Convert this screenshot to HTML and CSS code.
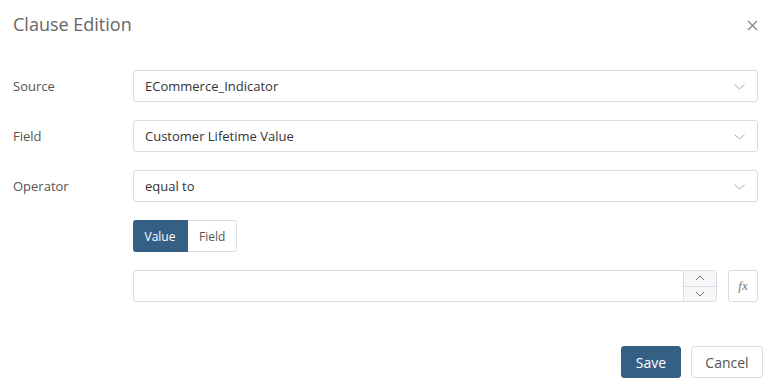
FILE: index.html
```html
<!DOCTYPE html>
<html lang="en">
<head>
  <meta charset="UTF-8">
  <title>Clause Edition</title>
  <link rel="stylesheet" href="styles.css">
</head>
<body>
  <div class="modal">
    <header class="modal-header">
      <h1>Clause Edition</h1>
      <button class="close" aria-label="Close">
        <svg width="11" height="11" viewBox="0 0 11 11"><path d="M1 1L10 10M10 1L1 10" stroke="#888" stroke-width="1.4"/></svg>
      </button>
    </header>

    <main class="modal-body">
      <div class="row">
        <label>Source</label>
        <div class="select">ECommerce_Indicator<svg class="caret" width="11" height="6" viewBox="0 0 11 6"><path d="M0.5 0.5L5.5 5L10.5 0.5" fill="none" stroke="#aaa" stroke-width="1"/></svg></div>
      </div>
      <div class="row">
        <label>Field</label>
        <div class="select">Customer Lifetime Value<svg class="caret" width="11" height="6" viewBox="0 0 11 6"><path d="M0.5 0.5L5.5 5L10.5 0.5" fill="none" stroke="#aaa" stroke-width="1"/></svg></div>
      </div>
      <div class="row">
        <label>Operator</label>
        <div class="select">equal to<svg class="caret" width="11" height="6" viewBox="0 0 11 6"><path d="M0.5 0.5L5.5 5L10.5 0.5" fill="none" stroke="#aaa" stroke-width="1"/></svg></div>
      </div>
      <div class="row">
        <span></span>
        <div class="toggle">
          <button class="active">Value</button>
          <button>Field</button>
        </div>
      </div>
      <div class="row">
        <span></span>
        <div class="value-line">
          <div class="number">
            <input type="text">
            <div class="spin">
              <span><svg width="10" height="6" viewBox="0 0 10 6"><path d="M1 5L5 1L9 5" fill="none" stroke="#777" stroke-width="1"/></svg></span>
              <span><svg width="10" height="6" viewBox="0 0 10 6"><path d="M1 1L5 5L9 1" fill="none" stroke="#777" stroke-width="1"/></svg></span>
            </div>
          </div>
          <button class="fx"><i>fx</i></button>
        </div>
      </div>
    </main>

    <footer class="modal-footer">
      <button class="btn primary">Save</button>
      <button class="btn">Cancel</button>
    </footer>
  </div>
</body>
</html>
```

FILE: styles.css
```css
body {
  margin: 0;
  background-color: #fff;
  font-family: "Open Sans", Arial, sans-serif;
  color: #333;
}

.modal {
  width: 776px;
  height: 389px;
}

.modal-header {
  display: flex;
  align-items: center;
  justify-content: space-between;
  height: 48px;
  padding: 0 18px 0 13px;
}

.modal-header h1 {
  margin: 0;
  font-size: 18px;
  font-weight: 400;
  color: #666;
}

.close {
  border: none;
  background: none;
  padding: 0;
  cursor: pointer;
  display: flex;
  margin-top: 2px;
}

.modal-body {
  padding: 22px 18px 0 13px;
}

.row {
  display: grid;
  grid-template-columns: 120px 1fr;
  align-items: center;
  margin-bottom: 18px;
}

.row label {
  font-size: 13px;
  color: #555;
}

.select {
  position: relative;
  height: 30px;
  line-height: 30px;
  border: 1px solid #dcdce3;
  border-radius: 3px;
  padding: 0 11px;
  font-size: 13px;
  color: #333;
}

.caret {
  position: absolute;
  right: 12px;
  top: 13px;
}

.toggle {
  display: flex;
}

.toggle button {
  height: 32px;
  border: 1px solid #dcdce3;
  background: #fff;
  font-family: inherit;
  font-size: 12px;
  color: #555;
  padding: 0 11px;
  border-radius: 0 3px 3px 0;
  border-left: none;
}

.toggle button.active {
  background-color: #365f86;
  border-color: #365f86;
  color: #fff;
  border-radius: 3px 0 0 3px;
  width: 55px;
  padding: 0;
}

.value-line {
  display: flex;
  gap: 11px;
}

.number {
  flex: 1;
  display: flex;
  height: 30px;
  border: 1px solid #dcdce3;
  border-radius: 3px;
}

.number input {
  flex: 1;
  border: none;
  outline: none;
  background: none;
}

.spin {
  width: 32px;
  display: flex;
  flex-direction: column;
  border-left: 1px solid #dcdce3;
  background: #f7f7f9;
}

.spin span {
  flex: 1;
  display: flex;
  align-items: center;
  justify-content: center;
}

.spin span + span {
  border-top: 1px solid #dcdce3;
}

.fx {
  width: 30px;
  height: 32px;
  border: 1px solid #dcdce3;
  border-radius: 3px;
  background: #fff;
  font-family: "Liberation Serif", serif;
  font-size: 13px;
  color: #777;
  padding: 0;
}

.modal-footer {
  display: flex;
  justify-content: flex-end;
  gap: 10px;
  padding: 26px 13px 0 0;
}

.btn {
  height: 32px;
  border: 1px solid #dcdce3;
  border-radius: 3px;
  background: #fff;
  font-family: inherit;
  font-size: 14px;
  color: #555;
  width: 72px;
  padding: 0;
}

.btn.primary {
  background-color: #365f86;
  border-color: #365f86;
  color: #fff;
  width: 60px;
}
```
